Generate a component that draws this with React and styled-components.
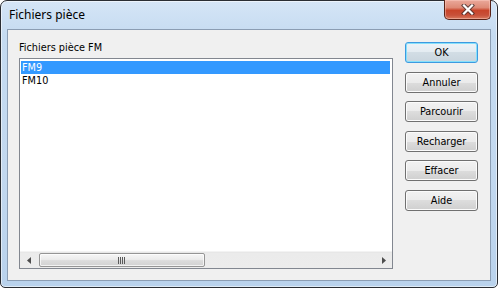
import React from "react";
import styled, { createGlobalStyle } from "styled-components";

const Global = createGlobalStyle`
  html, body { margin: 0; padding: 0; background: #ffffff; }
  body { width: 498px; height: 288px; overflow: hidden; }
  * { box-sizing: border-box; }
`;

const Window = styled.div`
  width: 498px;
  height: 288px;
  border: 1px solid #2a2d33;
  border-radius: 7px 7px 5px 5px;
  background: linear-gradient(180deg, #d5e5f6 0%, #c5dbf1 12%, #c2d8ef 60%, #b9d2ec 100%);
  padding: 0 6px 6px 6px;
  display: flex;
  flex-direction: column;
  box-shadow: inset 0 0 0 1px rgba(255, 255, 255, 0.55);
`;

const TitleBar = styled.div`
  position: relative;
  height: 28px;
  display: flex;
  align-items: center;
  margin: 0 -6px;
  padding-left: 8px;
`;

const TitleText = styled.span`
  font-family: "Noto Sans", "Open Sans", sans-serif;
  font-size: 12px;
  color: #000;
  margin-top: -2px;
`;

const CloseButton = styled.div`
  position: absolute;
  top: -1px;
  right: 6px;
  width: 47px;
  height: 20px;
  border: 1px solid #5a2318;
  border-top: none;
  border-radius: 0 0 5px 5px;
  background: linear-gradient(180deg, #eaa99b 0%, #de8a76 40%, #c8442a 55%, #c8513a 80%, #d97a5e 100%);
  box-shadow: inset 0 0 0 1px rgba(255, 210, 200, 0.45);
  display: flex;
  align-items: center;
  justify-content: center;
`;

const Client = styled.div`
  flex: 1;
  border: 1px solid #8b9db3;
  background: #f0f0f0;
  padding: 11px 12px 11px 11px;
  display: grid;
  grid-template-columns: 374px 73px;
  column-gap: 12px;
  font-family: "DejaVu Sans Condensed", "DejaVu Sans", sans-serif;
  font-stretch: condensed;
  font-size: 10.8px;
  color: #000;
`;

const LeftColumn = styled.div`
  display: flex;
  flex-direction: column;
`;

const Label = styled.div`
  height: 13px;
  line-height: 13px;
  margin-bottom: 4px;
`;

const ListBox = styled.div`
  height: 211px;
  border: 1px solid #828790;
  background: #fff;
  display: flex;
  flex-direction: column;
`;

const Rows = styled.div`
  flex: 1;
  padding: 2px 2px 0 1px;
`;

const Row = styled.div`
  height: 13px;
  line-height: 13px;
  padding-left: 1px;
  background: ${(p) => (p.$selected ? "#3399ff" : "transparent")};
  color: ${(p) => (p.$selected ? "#fff" : "#000")};
`;

const HScroll = styled.div`
  height: 17px;
  display: flex;
  background: linear-gradient(180deg, #e3e3e3 0px, #ebebeb 1px, #ececec 100%);
  border-top: 1px solid #f3f3f3;
`;

const ArrowBtn = styled.div`
  width: 17px;
  height: 100%;
  display: flex;
  align-items: center;
  justify-content: center;
`;

const Track = styled.div`
  flex: 1;
  display: flex;
  align-items: center;
  padding-left: 2px;
`;

const Thumb = styled.div`
  height: 14px;
  border: 1px solid #959595;
  border-radius: 2px;
  background: linear-gradient(180deg, #f6f6f6 0%, #ececec 45%, #dcdcdc 55%, #d2d2d2 100%);
  box-shadow: inset 0 0 0 1px rgba(255, 255, 255, 0.7);
  display: flex;
  align-items: center;
  justify-content: center;
`;

const ButtonColumn = styled.div`
  display: flex;
  flex-direction: column;
  gap: 8.6px;
  padding-top: 1px;
`;

const Button = styled.div`
  height: 21px;
  border: 1px solid ${(p) => (p.$default ? "#3c9ae0" : "#707070")};
  border-radius: 3px;
  background: ${(p) =>
    p.$default
      ? "linear-gradient(180deg, #edf3f7 0%, #e3ebf1 50%, #d2dde5 50%, #c9d5de 100%)"
      : "linear-gradient(180deg, #f2f2f2 0%, #ebebeb 50%, #dddddd 50%, #cfcfcf 100%)"};
  box-shadow: inset 0 0 0 1px ${(p) => (p.$default ? "#86e0fb" : "#fbfbfb")};
  display: flex;
  align-items: center;
  justify-content: center;
  line-height: 13px;
`;

const rows = [
  { name: "FM9", selected: true },
  { name: "FM10", selected: false },
];

const buttons = ["OK", "Annuler", "Parcourir", "Recharger", "Effacer", "Aide"];

export default function App() {
  return (
    <>
      <Global />
      <Window>
        <TitleBar>
          <TitleText>Fichiers pièce</TitleText>
          <CloseButton>
            <svg width="14" height="11" viewBox="0 0 14 11">
              <path d="M3 1.5 L11 9.5 M11 1.5 L3 9.5" stroke="#3b2a2a" strokeWidth="4.2" strokeLinecap="square" fill="none" opacity="0.75" />
              <path d="M3 1.5 L11 9.5 M11 1.5 L3 9.5" stroke="#ffffff" strokeWidth="2.2" strokeLinecap="square" fill="none" />
            </svg>
          </CloseButton>
        </TitleBar>
        <Client>
          <LeftColumn>
            <Label>Fichiers pièce FM</Label>
            <ListBox>
              <Rows>
                {rows.map((r) => (
                  <Row key={r.name} $selected={r.selected}>
                    {r.name}
                  </Row>
                ))}
              </Rows>
              <HScroll>
                <ArrowBtn>
                  <svg width="4" height="7" viewBox="0 0 4 7">
                    <path d="M4 0 L0 3.5 L4 7 Z" fill="#4d4d4d" />
                  </svg>
                </ArrowBtn>
                <Track>
                  <Thumb style={{ width: 166 }}>
                    <svg width="8" height="7" viewBox="0 0 8 7">
                      <path d="M0.5 0 V7 M2.5 0 V7 M4.5 0 V7 M6.5 0 V7" stroke="#5a5a5a" strokeWidth="1" />
                    </svg>
                  </Thumb>
                </Track>
                <ArrowBtn>
                  <svg width="4" height="7" viewBox="0 0 4 7">
                    <path d="M0 0 L4 3.5 L0 7 Z" fill="#4d4d4d" />
                  </svg>
                </ArrowBtn>
              </HScroll>
            </ListBox>
          </LeftColumn>
          <ButtonColumn>
            {buttons.map((b, i) => (
              <Button key={b} $default={i === 0}>
                {b}
              </Button>
            ))}
          </ButtonColumn>
        </Client>
      </Window>
    </>
  );
}
